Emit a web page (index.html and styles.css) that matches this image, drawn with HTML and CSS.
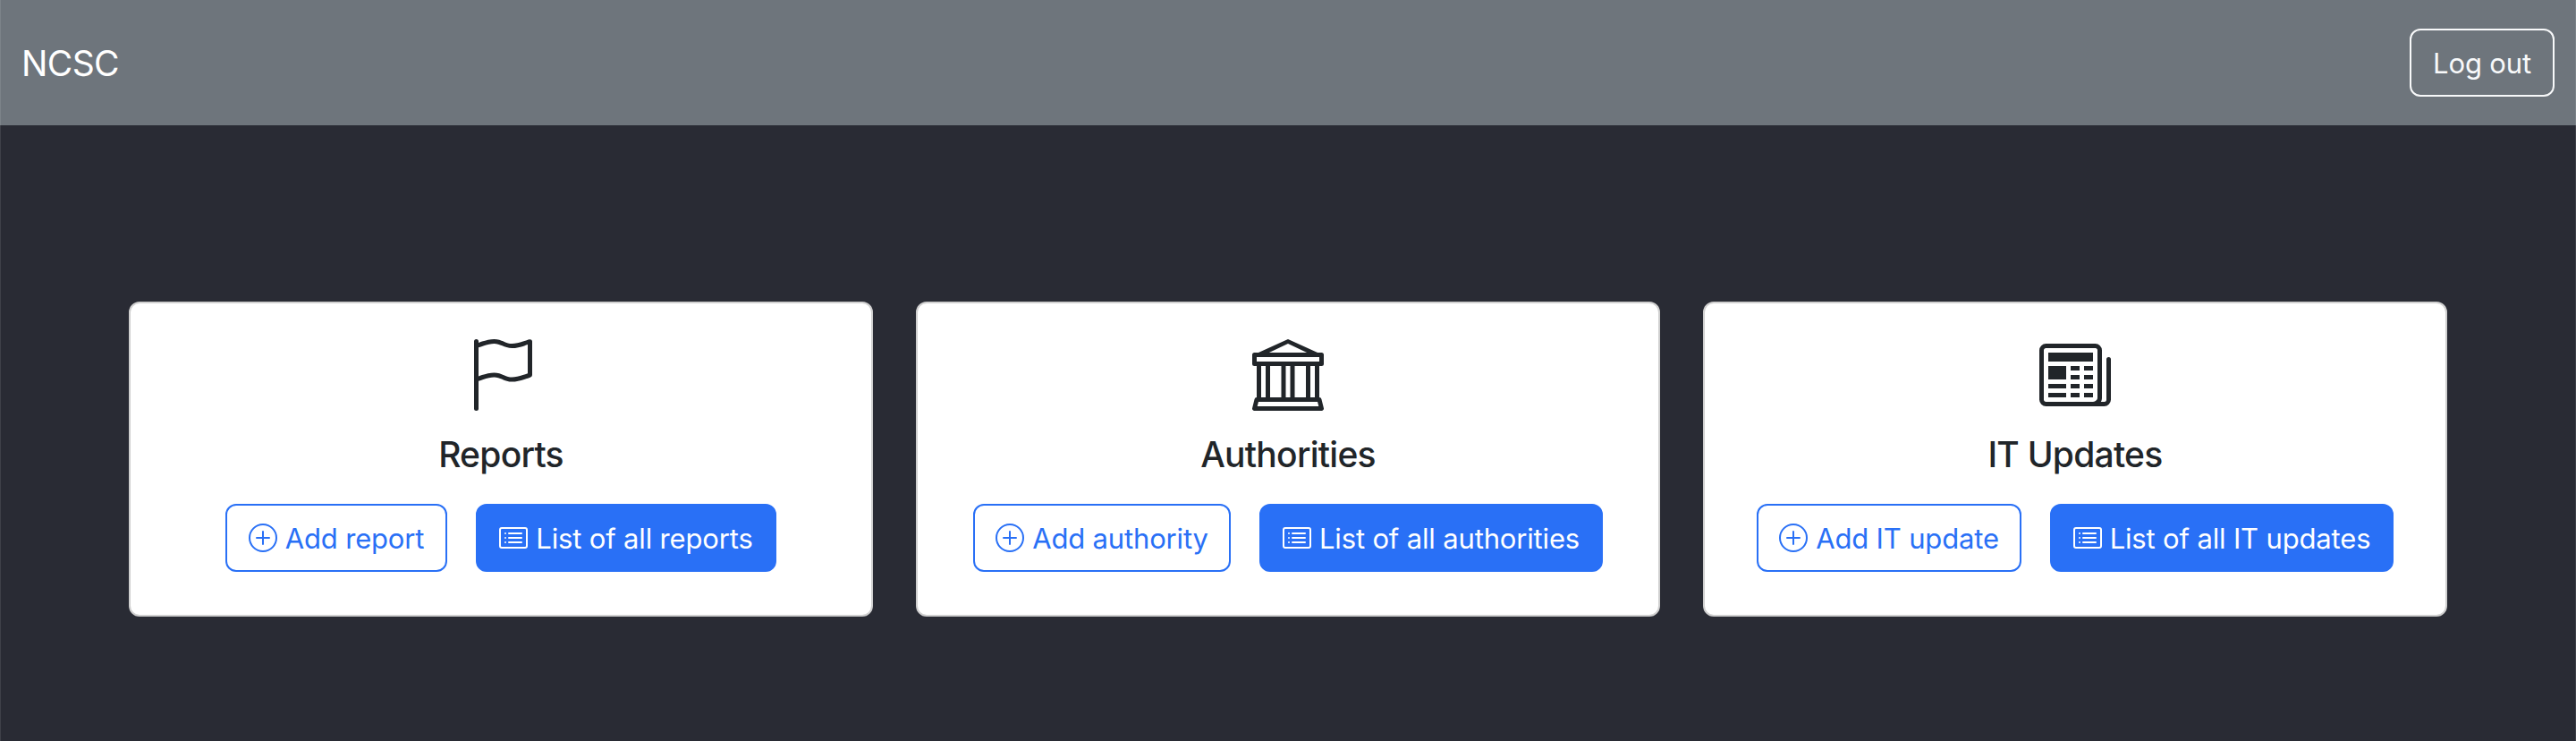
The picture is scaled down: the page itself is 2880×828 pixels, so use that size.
FILE: index.html
```html
<!DOCTYPE html>
<html lang="en">
<head>
<meta charset="utf-8">
<title>NCSC</title>
<link rel="stylesheet" href="styles.css">
</head>
<body>
<svg class="sprite" aria-hidden="true">
  <symbol id="plus-circle" viewBox="0 0 16 16">
    <path d="M8 15A7 7 0 1 1 8 1a7 7 0 0 1 0 14m0 1A8 8 0 1 0 8 0a8 8 0 0 0 0 16"/>
    <path d="M8 4a.5.5 0 0 1 .5.5v3h3a.5.5 0 0 1 0 1h-3v3a.5.5 0 0 1-1 0v-3h-3a.5.5 0 0 1 0-1h3v-3A.5.5 0 0 1 8 4"/>
  </symbol>
  <symbol id="card-list" viewBox="0 0 16 16">
    <path d="M14.5 3a.5.5 0 0 1 .5.5v9a.5.5 0 0 1-.5.5h-13a.5.5 0 0 1-.5-.5v-9a.5.5 0 0 1 .5-.5zm-13-1A1.5 1.5 0 0 0 0 3.500v9A1.500 1.500 0 0 0 1.500 14h13a1.500 1.500 0 0 0 1.500-1.500v-9A1.500 1.500 0 0 0 14.500 2z"/>
    <path d="M5 8a.5.5 0 0 1 .5-.5h7a.5.5 0 0 1 0 1h-7A.5.5 0 0 1 5 8m0-2.500a.5.5 0 0 1 .5-.5h7a.5.5 0 0 1 0 1h-7a.5.5 0 0 1-.5-.5m0 5a.5.5 0 0 1 .5-.5h7a.5.5 0 0 1 0 1h-7a.5.5 0 0 1-.5-.5m-1-5a.5.5 0 1 1-1 0 .5.5 0 0 1 1 0M4 8a.5.5 0 1 1-1 0 .5.5 0 0 1 1 0m0 2.500a.5.5 0 1 1-1 0 .5.5 0 0 1 1 0"/>
  </symbol>
</svg>
<header class="navbar">
  <a class="brand">NCSC</a>
  <button class="btn btn-outline-light logout">Log out</button>
</header>
<main class="cards">
  <section class="card">
    <svg class="card-icon" viewBox="0 0 16 16"><path d="M14.778.085A.5.5 0 0 1 15 .5V8a.5.5 0 0 1-.314.464L14.5 8l.186.464-.003.001-.006.003-.023.009a12 12 0 0 1-.397.15c-.264.095-.631.223-1.047.35-.816.252-1.879.523-2.710.523-.847 0-1.548-.28-2.158-.525l-.028-.010C7.680 8.710 7.140 8.500 6.500 8.500c-.7 0-1.638.230-2.437.477A20 20 0 0 0 3 9.342V15.500a.5.5 0 0 1-1 0V.5a.5.5 0 0 1 1 0v.282c.226-.079.496-.170.790-.260C4.606.272 5.670 0 6.500 0c.840 0 1.524.277 2.121.519l.043.018C9.286.788 9.828 1 10.500 1c.7 0 1.638-.230 2.437-.477a20 20 0 0 0 1.349-.476l.019-.007.004-.002h.001M14 1.221c-.220.078-.480.167-.766.255-.810.252-1.872.523-2.734.523-.886 0-1.592-.286-2.203-.534l-.008-.003C7.662 1.210 7.139 1 6.500 1c-.669 0-1.606.229-2.415.478A21 21 0 0 0 3 1.845v6.433c.220-.078.480-.167.766-.255C4.576 7.770 5.638 7.500 6.500 7.500c.847 0 1.548.280 2.158.525l.028.010C9.320 8.290 9.860 8.500 10.500 8.500c.668 0 1.606-.229 2.415-.478A21 21 0 0 0 14 7.655V1.222z"/></svg>
    <h5 class="card-title">Reports</h5>
    <div class="actions">
      <a class="btn btn-outline add-report"><svg class="icon"><use href="#plus-circle"/></svg>Add report</a>
      <a class="btn btn-primary list-reports"><svg class="icon"><use href="#card-list"/></svg>List of all reports</a>
    </div>
  </section>
  <section class="card">
    <svg class="card-icon" viewBox="0 0 16 16"><path d="m8 0 6.610 3h.890a.5.5 0 0 1 .5.5v2a.5.5 0 0 1-.5.5H15v7a.5.5 0 0 1 .485.380l.5 2a.498.498 0 0 1-.485.620H.5a.498.498 0 0 1-.485-.620l.5-2A.5.5 0 0 1 1 13V6H.5a.5.5 0 0 1-.5-.5v-2A.5.5 0 0 1 .5 3h.890zM3.777 3h8.447L8 1zM2 6v7h1V6zm2 0v7h2.500V6zm3.500 0v7h1V6zm2 0v7H12V6zM13 6v7h1V6zm2-1V4H1v1zm-.390 9H1.390l-.250 1h13.720z"/></svg>
    <h5 class="card-title">Authorities</h5>
    <div class="actions">
      <a class="btn btn-outline add-authority"><svg class="icon"><use href="#plus-circle"/></svg>Add authority</a>
      <a class="btn btn-primary list-authorities"><svg class="icon"><use href="#card-list"/></svg>List of all authorities</a>
    </div>
  </section>
  <section class="card">
    <svg class="card-icon" viewBox="0 0 16 16"><path d="M0 2.500A1.500 1.500 0 0 1 1.500 1h11A1.500 1.500 0 0 1 14 2.500v10.528c0 .3-.050.654-.238.972h.738a.5.5 0 0 0 .5-.5v-9a.5.5 0 0 1 1 0v9a1.500 1.500 0 0 1-1.500 1.500H1.497A1.497 1.497 0 0 1 0 13.500zM12 14c.370 0 .654-.211.853-.441.092-.106.147-.279.147-.531V2.500a.5.5 0 0 0-.5-.5h-11a.5.5 0 0 0-.5.5v11c0 .278.223.5.497.5z"/><path d="M2 3h10v2H2zm0 3h4v3H2zm0 4h4v1H2zm0 2h4v1H2zm5-6h2v1H7zm3 0h2v1h-2zM7 8h2v1H7zm3 0h2v1h-2zm-3 2h2v1H7zm3 0h2v1h-2zm-3 2h2v1H7zm3 0h2v1h-2z"/></svg>
    <h5 class="card-title">IT Updates</h5>
    <div class="actions">
      <a class="btn btn-outline add-update"><svg class="icon"><use href="#plus-circle"/></svg>Add IT update</a>
      <a class="btn btn-primary list-updates"><svg class="icon"><use href="#card-list"/></svg>List of all IT updates</a>
    </div>
  </section>
</main>
</body>
</html>
```
FILE: styles.css
```css
* { box-sizing: border-box; }
body {
  margin: 0;
  min-height: 828px;
  background: #292b34;
  color: #212529;
  font-family: Inter, "Liberation Sans", sans-serif;
}
/* hairline along the window's sides */
body::after {
  content: "";
  position: fixed;
  inset: 0;
  border: solid rgba(255, 255, 255, 0.1);
  border-width: 0 1px;
  pointer-events: none;
}
.sprite { display: none; }
.navbar {
  height: 140px;
  padding: 0 24px;
  display: flex;
  align-items: center;
  justify-content: space-between;
  background: #6e757c;
}
.brand { padding-top: 2px; color: #fff; font-size: 39px; letter-spacing: -0.6px; line-height: 60px; }
.btn {
  display: inline-flex;
  align-items: center;
  justify-content: center;
  gap: 9px;
  height: 76px;
  padding: 2px 0 0;
  border: 2px solid;
  border-radius: 12px;
  background: none;
  font-family: inherit;
  font-size: 31px;
  line-height: 48px;
  letter-spacing: -0.16px;
  white-space: nowrap;
}
.btn-outline-light { color: #f8f9fa; }
.btn-outline { color: #2970f6; }
.btn-primary { color: #fff; background: #2970f6; border-color: #2970f6; }
.logout { width: 162px; }
.add-report { width: 248px; }
.list-reports { width: 336px; }
.add-authority { width: 288px; }
.list-authorities { width: 384px; }
.add-update { width: 296px; }
.list-updates { width: 384px; }
.icon { width: 32px; height: 32px; margin-top: -2px; flex: none; fill: currentColor; }
.cards {
  display: grid;
  grid-template-columns: repeat(3, 1fr);
  gap: 48px;
  padding: 197px 144px 0;
}
.card {
  height: 352px;
  padding: 40px 0 0;
  display: flex;
  flex-direction: column;
  align-items: center;
  background: #fff;
  border: 2px solid #d0d0d0;
  border-radius: 12px;
}
.card-icon { width: 80px; height: 80px; fill: currentColor; }
.card-title {
  margin: 25px 0 31px;
  font-size: 39px;
  font-weight: 500;
  line-height: 48px;
  letter-spacing: -0.75px;
}
.actions { display: flex; gap: 32px; }
```
